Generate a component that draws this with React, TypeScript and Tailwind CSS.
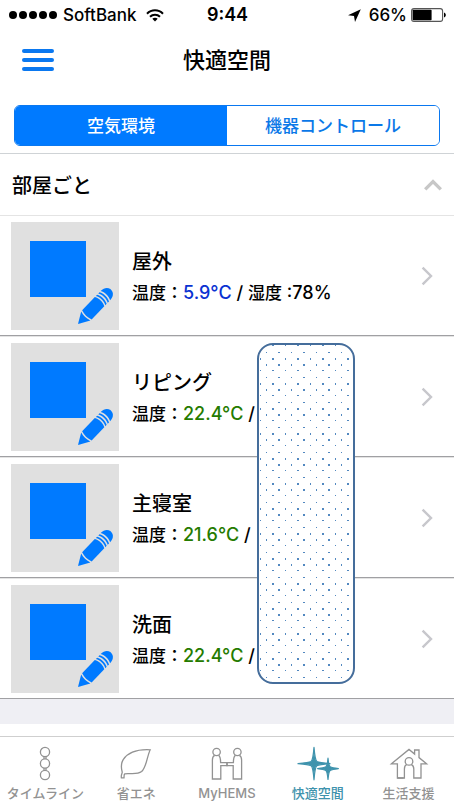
import React from 'react';

type Room = { name: string; temp: string; color: string; humidity?: string };

const rooms: Room[] = [
    { name: '屋外', temp: '5.9°C', color: 'text-[#0a32d2]', humidity: '78%' },
    { name: 'リピング', temp: '22.4°C', color: 'text-[#257b00]' },
    { name: '主寝室', temp: '21.6°C', color: 'text-[#257b00]' },
    { name: '洗面', temp: '22.4°C', color: 'text-[#257b00]' },
];

const App: React.FC = () => (
    <div className="min-h-screen flex flex-col bg-white text-black font-['Inter','Noto_Sans_CJK_JP',sans-serif]">
        <StatusBar />

        <header className="grid grid-cols-[32px_1fr_32px] items-center px-[22px] h-[60px]">
            <button aria-label="メニュー" className="flex flex-col gap-[5px]">
                <span className="h-1 w-full rounded-full bg-[#0a78f0]" />
                <span className="h-1 w-full rounded-full bg-[#0a78f0]" />
                <span className="h-1 w-full rounded-full bg-[#0a78f0]" />
            </button>
            <h1 className="text-center text-[22px] leading-8 font-medium">快適空間</h1>
        </header>

        {/* Segmented control */}
        <div className="px-[14px] pt-[15px] pb-[7px] border-b border-[#cfd3d6]">
            <div className="flex h-[41px] rounded-md border border-[#0a78f0] overflow-hidden text-[17px] font-medium">
                <button className="flex-1 pt-[2px] bg-[#007aff] text-white">空気環境</button>
                <button className="flex-1 pt-[2px] bg-white text-[#0a78e8]">機器コントロール</button>
            </div>
        </div>

        <main className="relative">
            <button className="flex w-full h-[61px] items-center justify-between px-3">
                <span className="pt-[2px] text-[20px] font-medium">部屋ごと</span>
                <svg viewBox="0 0 18 12" className="w-[18px] h-3" fill="none" stroke="#c7c7c7" strokeWidth="3.4">
                    <path d="M1.2 10.4 L9 2.6 L16.8 10.4" />
                </svg>
            </button>

            <ul>
                {rooms.map((room) => (
                    <RoomRow key={room.name} room={room} />
                ))}
            </ul>

            {/* Cover over the humidity values */}
            <DottedPanel />
        </main>

        <div className="h-[25px] bg-[#efeff4]" />

        <TabBar />
    </div>
);

const StatusBar = () => (
    <div className="grid grid-cols-[1fr_auto_1fr] items-center h-[30px] pl-[9px] pr-2 text-[17px] leading-6 font-medium">
        <div className="flex items-center">
            <svg viewBox="0 0 48 8" className="w-12 h-2">
                <circle cx="4" cy="4" r="4" />
                <circle cx="14" cy="4" r="4" />
                <circle cx="24" cy="4" r="4" />
                <circle cx="34" cy="4" r="4" />
                <circle cx="44" cy="4" r="4" />
            </svg>
            <span className="ml-[6px]">SoftBank</span>
            <svg viewBox="0 0 18 13" className="w-[18px] h-[13px] ml-[10px]" fill="none" stroke="black" strokeWidth="2">
                <path d="M1 4.8 C5.4 0.2 12.6 0.2 17 4.8" />
                <path d="M4 7.8 C6.8 5 11.2 5 14 7.8" />
                <path d="M9 12.6 L6.3 9.8 C7.8 8.5 10.2 8.5 11.7 9.8 Z" fill="black" stroke="none" />
            </svg>
        </div>
        <span className="text-lg leading-6 font-semibold">9:44</span>
        <div className="flex items-center justify-end">
            <svg viewBox="0 0 13 13" className="w-[13px] h-[13px]">
                <path d="M12.8 0.2 L0 6.2 L6 6.9 L7 13 Z" />
            </svg>
            <span className="ml-[8px]">66%</span>
            <svg viewBox="0 0 35 14" className="w-[35px] h-[14px] ml-1">
                <rect x="0.6" y="0.6" width="31" height="12.8" rx="2.4" fill="white" stroke="#555" strokeWidth="1.1" />
                <rect x="1.6" y="1.8" width="19" height="10.4" rx="0.8" />
                <path d="M33 4.6 C35.4 5.4 35.4 8.6 33 9.4 Z" />
            </svg>
        </div>
    </div>
);

const RoomRow = ({ room }: { room: Room }) => (
    <li className="flex items-center border-t border-t-[#e4e4e4] border-b border-b-[#a0a0a3] pt-[6px] pb-[5px] pl-[11px] pr-[21px]">
        <button aria-label={`${room.name}を編集`} className="w-[108px] h-[108px] shrink-0 bg-[#e0e0e0]">
            <svg viewBox="0 0 108 108" className="w-full h-full" fill="#007aff">
                <rect x="19" y="19" width="56" height="56" />
                <Pencil />
            </svg>
        </button>
        <a href="#" className="flex flex-1 items-center justify-between pl-[13px]">
            <div className="pt-[2px]">
                <div className="text-[20px] leading-8 font-medium">{room.name}</div>
                <div className="text-[17px] leading-[30px] font-medium whitespace-nowrap">
                    温度：<span className={`text-lg leading-none ${room.color}`}>{room.temp}</span>
                    <span className="text-lg leading-none"> / </span>
                    {room.humidity && (
                        <>
                            湿度<span className="text-lg leading-none"> :{room.humidity}</span>
                        </>
                    )}
                </div>
            </div>
            <svg viewBox="0 0 12 20" className="w-3 h-5" fill="none" stroke="#c7c7cc" strokeWidth="2.4">
                <path d="M1.6 1.6 L10 10 L1.6 18.4" />
            </svg>
        </a>
    </li>
);

const Pencil = () => (
    <g transform="translate(67 102) rotate(-46)">
        <path d="M0 0 L11.2 -6.4 C9.8 -2.6 9.8 2.6 11.2 6.4 Z" />
        <path d="M12.8 -6.6 H31 C33.2 -3 33.2 3 31 6.6 H12.8 C11.2 2.6 11.2 -2.6 12.8 -6.6 Z" />
        <path d="M32.6 -6.6 H34.4 C36.6 -3 36.6 3 34.4 6.6 H32.6 C34.8 3 34.8 -3 32.6 -6.6 Z" />
        <path d="M36 -6.6 H37.8 C40 -3 40 3 37.8 6.6 H36 C38.2 3 38.2 -3 36 -6.6 Z" />
        <path d="M39.4 -6.6 C50.4 -6.8 50.4 6.8 39.4 6.6 C41.6 3 41.6 -3 39.4 -6.6 Z" />
    </g>
);

const DottedPanel = () => (
    <div className="absolute left-[257px] top-[189px] w-[98px] h-[341px] rounded-2xl border-2 border-[#456d9b] bg-white overflow-hidden">
        <svg className="w-full h-full" shapeRendering="crispEdges">
            <defs>
                <pattern id="dots" width="25" height="25" patternUnits="userSpaceOnUse" fill="#5288c0">
                    <rect x="1" y="0" width="1" height="1" />
                    <rect x="13" y="0" width="2" height="1" />
                    <rect x="7" y="7" width="1" height="1" />
                    <rect x="19" y="7" width="2" height="1" />
                    <rect x="1" y="13" width="1" height="2" />
                    <rect x="13" y="13" width="2" height="2" />
                    <rect x="7" y="19" width="1" height="2" />
                    <rect x="19" y="19" width="2" height="2" />
                </pattern>
            </defs>
            <rect width="100%" height="100%" fill="url(#dots)" />
        </svg>
    </div>
);

const tabs = [
    {
        label: 'タイムライン',
        icon: (
            <>
                <circle cx="21" cy="7" r="4.6" />
                <circle cx="21" cy="18.5" r="4.6" />
                <circle cx="21" cy="30" r="4.6" />
                <path d="M20 11.6v2.3M22 11.6v2.3M20 23.1v2.3M22 23.1v2.3" />
            </>
        ),
    },
    {
        label: '省エネ',
        icon: (
            <path d="M35.2 4.8 C23 4.2 13 7.4 8.2 14.6 C5.6 19 6.2 23.4 7.2 27 C7.4 28.6 5.8 29.6 6.4 32.8 H9 C9.2 30.8 8.8 29.6 9.8 28.8 C15 28 22 30.2 26.6 26.6 C31.6 22 31.8 12 35.2 4.8 Z" />
        ),
    },
    {
        label: 'MyHEMS',
        icon: (
            <>
                <circle cx="10.6" cy="7" r="3.7" />
                <circle cx="31.4" cy="7" r="3.7" />
                <path d="M8.6 10.4 C6.6 11.4 6.4 13 6.4 15 V34 H14.8 V20.6 H21 V17.6 H14.6 C14.6 13.6 14.4 11.6 12.6 10.4" />
                <path d="M33.4 10.4 C35.4 11.4 35.6 13 35.6 15 V34 H27.2 V20.6 H21 V17.6 H27.4 C27.4 13.6 27.6 11.6 29.4 10.4" />
            </>
        ),
    },
    {
        label: '快適空間',
        active: true,
        icon: (
            <g fill="currentColor" stroke="currentColor" strokeWidth="1.2" strokeLinejoin="round">
                <path d="M17 2.4 C17.8 12 18.2 15.4 20 16.6 C22 17.6 26 18 33 18.6 C26 19.2 22 19.6 20 20.6 C18.2 21.8 17.8 25 17 34.8 C16.2 25 15.8 21.8 14 20.6 C12 19.6 8 19.2 1 18.6 C8 18 12 17.6 14 16.6 C15.8 15.4 16.2 12 17 2.4 Z" />
                <path d="M31 13.2 C31.6 19.4 32 21 33.2 21.8 C34.8 22.6 37 23 41.4 23.6 C37 24.2 34.8 24.6 33.2 25.4 C32 26.2 31.6 28 31 34.4 C30.4 28 30 26.2 28.8 25.4 C27.2 24.6 25 24.2 20.6 23.6 C25 23 27.2 22.6 28.8 21.8 C30 21 30.4 19.4 31 13.2 Z" />
            </g>
        ),
    },
    {
        label: '生活支援',
        icon: (
            <>
                <path d="M15.6 33 H9.4 V18.8 H3.4 L21 4.4 L26.6 9 V5 H31 V12.6 L38.6 18.8 H33 V33 H25.8 V24 C25.8 21.6 24.8 20.2 23.4 19.6" />
                <circle cx="21" cy="16.4" r="3.8" />
                <path d="M18.6 19.6 C17.2 20.2 16.4 21.6 16.4 24 V33 H9.4" />
            </>
        ),
    },
];

const TabBar = () => (
    <nav className="mt-auto grid grid-cols-5 h-[70px] border-t border-[#cfcfcf] bg-white">
        {tabs.map((tab) => (
            <a
                key={tab.label}
                href="#"
                className={`flex flex-col items-center pt-[8px] text-[13px] leading-5 font-medium whitespace-nowrap ${tab.active ? 'text-[#3f93ad]' : 'text-[#929292]'}`}
            >
                <svg viewBox="0 0 42 38" className="w-[42px] h-[38px]" fill="none" stroke="currentColor" strokeWidth="1.3">
                    {tab.icon}
                </svg>
                <span>{tab.label}</span>
            </a>
        ))}
    </nav>
);

export default App;
